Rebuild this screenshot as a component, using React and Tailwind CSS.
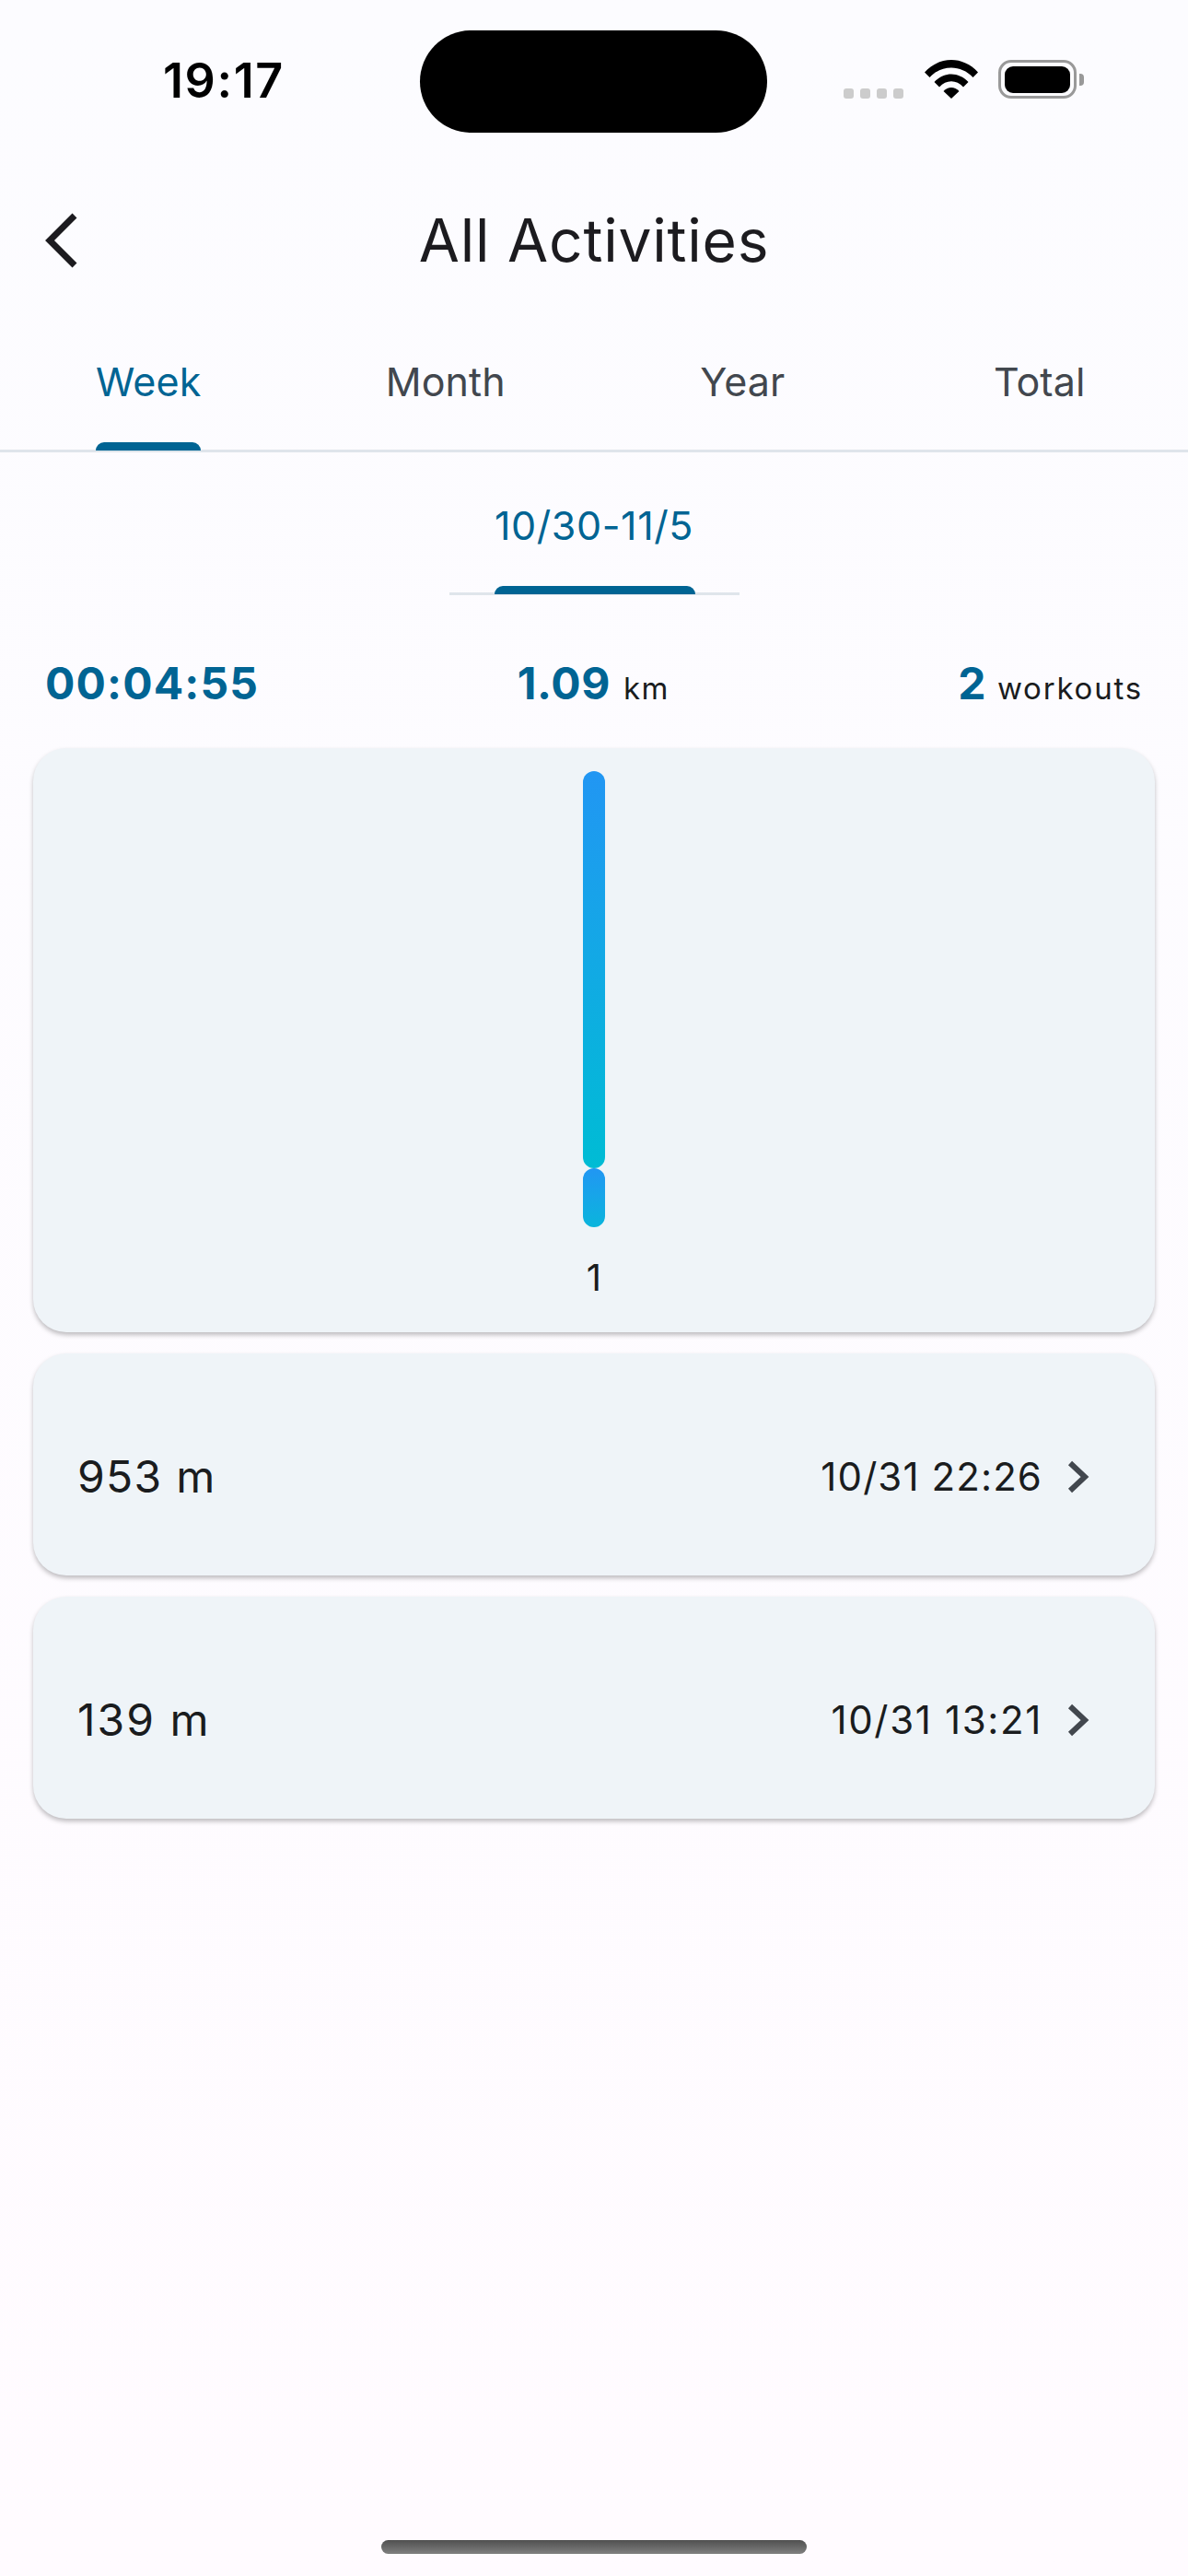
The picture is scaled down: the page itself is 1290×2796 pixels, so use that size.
import React from 'react';

const tabs = ['Week', 'Month', 'Year', 'Total'];

const activities = [
    { distance: '953 m', time: '10/31 22:26', distanceClass: 'tracking-[1.3px]', timeClass: 'tracking-[1.1px]' },
    { distance: '139 m', time: '10/31 13:21', distanceClass: 'tracking-[2px]', timeClass: 'tracking-[1.65px]' },
];

const card = 'rounded-[36px] bg-[#eff4f8] shadow-[0_3px_5px_rgba(0,0,0,0.25)]';

const StatusBar = () => (
    <div className="flex h-[206px] items-start">
        <div className="mt-[58px] w-[456px] pl-[177px] text-[52px] leading-[60px] font-semibold tracking-[1.6px] text-black">19:17</div>
        <div className="mt-[33px] h-[111px] w-[377px] rounded-[56px] bg-black" />
        <div className="mt-[65px] ml-[83px] flex items-start">
            <div className="mt-[31px] flex gap-[7px]">
                <span className="h-[11px] w-[11px] rounded-[3px] bg-[#cccccc]" />
                <span className="h-[11px] w-[11px] rounded-[3px] bg-[#cccccc]" />
                <span className="h-[11px] w-[11px] rounded-[3px] bg-[#cccccc]" />
                <span className="h-[11px] w-[11px] rounded-[3px] bg-[#cccccc]" />
            </div>
            <svg className="ml-[23px]" width="58" height="42" viewBox="0 0 58 42">
                <path d="M0 13.500C16-4.500 42-4.500 58 13.500L52.500 19C39.500 5 18.500 5 5.500 19Z" fill="#000" />
                <path d="M10.500 24C21 12.500 37 12.500 47.500 24L42 29.500C34.500 21 23.500 21 16 29.500Z" fill="#000" />
                <path d="M20.500 34C25.500 28.500 32.500 28.500 37.500 34L29 42Z" fill="#000" />
            </svg>
            <div className="ml-[22px] flex h-[42px] w-[85px] items-center justify-center rounded-[14px] border-[3px] border-[#999999]">
                <div className="h-[29px] w-[71px] rounded-[9px] bg-black" />
            </div>
            <div className="mt-[15px] ml-[3px] h-[13px] w-[5px] rounded-r-[4px] bg-[#999999]" />
        </div>
    </div>
);

const Header = () => (
    <div className="relative flex h-[110px] items-center justify-center">
        <svg className="absolute top-[24px] left-[46px]" width="40" height="62" viewBox="0 0 40 62" fill="none">
            <path d="M35 4L8 31L35 58" stroke="#1c1b1f" strokeWidth="7" />
        </svg>
        <h1 className="text-[64px] leading-[80px] font-normal tracking-[0.8px] text-[#1c1b1f]">All Activities</h1>
    </div>
);

const Tabs = () => (
    <div className="mt-[52px] grid h-[123px] grid-cols-4 border-b-[3px] border-[#dfe5eb]">
        {tabs.map((tab, i) => (
            <div key={tab} className="relative flex justify-center pt-[18px]">
                <span className={`text-[43px] leading-[56px] tracking-[0.1px] ${i === 0 ? 'text-[#006493]' : 'text-[#42474e]'}`}>{tab}</span>
                {i === 0 && <div className="absolute -bottom-[1px] left-[104px] h-[9px] w-[114px] rounded-t-[9px] bg-[#006493]" />}
            </div>
        ))}
    </div>
);

const WeekPicker = () => (
    <div className="mt-[50px] flex flex-col items-center">
        <div className="-mt-[1px] mb-[1px] text-[43px] leading-[60px] tracking-[0.6px] text-[#006493]">10/30-11/5</div>
        <div className="relative mt-[42px] h-[3px] w-[315px] bg-[#dfe5eb]">
            <div className="absolute bottom-[1px] left-[49px] h-[9px] w-[218px] rounded-t-[9px] bg-[#006493]" />
        </div>
    </div>
);

const Stats = () => (
    <div className="mt-[66px] flex h-[60px] items-baseline justify-between px-[49px] leading-[60px] font-bold text-[#006493]">
        <span className="text-[48px] tracking-[1.15px]">00:04:55</span>
        <span className="-ml-[33px] text-[48px] tracking-[0.6px]">
            1.09 <span className="ml-[2px] text-[33px] font-normal tracking-[1.3px] text-[#1a1c1e]">km</span>
        </span>
        <span className="text-[48px]">
            2 <span className="ml-[1px] text-[33px] font-normal tracking-[1.8px] text-[#1a1c1e]">workouts</span>
        </span>
    </div>
);

const Chart = () => (
    <div className={`${card} mt-[40px] flex h-[634px] flex-col items-center pt-[25px]`}>
        <div className="h-[431px] w-[24px] rounded-[12px] bg-gradient-to-b from-[#2196f3] to-[#00bcd4]" />
        <div className="h-[64px] w-[24px] rounded-[12px] bg-gradient-to-b from-[#2196f3] to-[#0ab5dc]" />
        <div className="mt-[25px] text-[40px] leading-[60px] text-[#1a1c1e]">1</div>
    </div>
);

const ActivityCard = ({ distance, time, distanceClass, timeClass }) => (
    <div className={`${card} flex h-[241px] items-center justify-between pt-[27px] pr-[70px] pl-[48px]`}>
        <span className={`text-[48px] leading-[60px] text-[#1a1c1e] ${distanceClass}`}>{distance}</span>
        <div className="flex items-center">
            <span className={`text-[42px] leading-[60px] text-[#1a1c1e] ${timeClass}`}>{time}</span>
            <svg className="ml-[26px]" width="26" height="36" viewBox="0 0 26 36" fill="none">
                <path d="M4 3L20 18L4 33" stroke="#42474e" strokeWidth="6" />
            </svg>
        </div>
    </div>
);

const App = () => (
    <div className="flex h-[2796px] w-[1290px] flex-col overflow-hidden bg-gradient-to-b from-[#fcfcff] to-[#fffbff] font-['Inter',sans-serif]">
        <StatusBar />
        <Header />
        <Tabs />
        <WeekPicker />
        <Stats />
        <div className="flex flex-col gap-[23px] px-[36px]">
            <Chart />
            {activities.map((a) => <ActivityCard key={a.time} {...a} />)}
        </div>
        <div className="mt-auto mb-[24px] h-[15px] w-[462px] self-center rounded-[8px] bg-gradient-to-b from-[#505050] to-[#808080]" />
    </div>
);

export default App;
